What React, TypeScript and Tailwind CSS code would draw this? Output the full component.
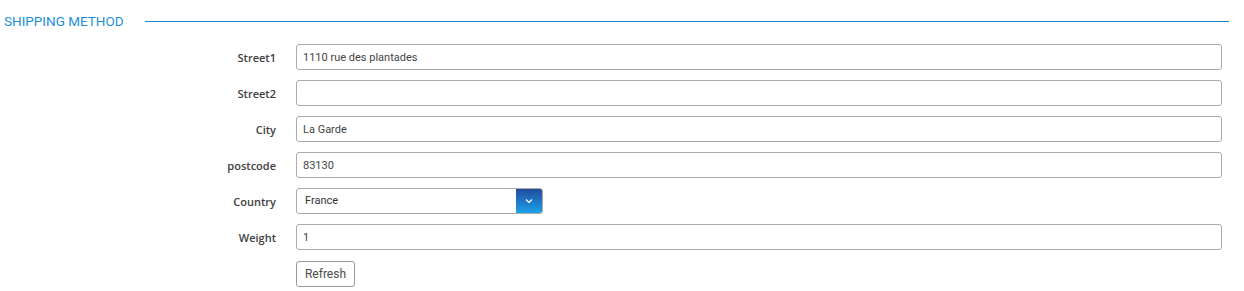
import React from "react";

const labelCls =
  "w-[276px] shrink-0 text-right text-[11px] font-semibold text-[#404040] leading-none [font-family:'Open_Sans',sans-serif]";
const inputCls =
  "h-[26px] rounded-[3px] border border-[#ababab] bg-white px-[6px] text-[11px] text-[#444] outline-none [font-family:Roboto,sans-serif]";

function Row({ label, children }: { label: string; children: React.ReactNode }) {
  return (
    <div className="flex h-[26px] items-center">
      <div className={labelCls}>{label}</div>
      <div className="ml-[20px] flex flex-1 items-center">{children}</div>
    </div>
  );
}

export default function App() {
  return (
    <div className="h-[291px] w-[1244px] bg-white pr-[22px] [font-family:Roboto,sans-serif]">
      <div className="flex h-[44px] items-center pl-[4px]">
        <div className="w-[121px] whitespace-nowrap text-[13.5px] font-normal uppercase text-[#1e8fd6] leading-none">Shipping Method</div>
        <div className="ml-[20px] mr-[-7px] h-px flex-1 bg-[#1a88c9] -translate-y-px" />
      </div>
      <div className="flex flex-col gap-[10px]">
        <Row label="Street1">
          <input className={inputCls + " flex-1"} defaultValue="1110 rue des plantades" />
        </Row>
        <Row label="Street2">
          <input className={inputCls + " flex-1"} defaultValue="" />
        </Row>
        <Row label="City">
          <input className={inputCls + " flex-1"} defaultValue="La Garde" />
        </Row>
        <Row label="postcode">
          <input className={inputCls + " flex-1"} defaultValue="83130" />
        </Row>
        <Row label="Country">
          <div className="flex h-[26px] w-[247px] overflow-hidden rounded-[3px] border border-[#ababab]">
            <div className="flex flex-1 items-center pl-[8px] text-[11px] text-[#333]">France</div>
            <div className="flex w-[26px] items-center justify-center bg-gradient-to-b from-[#1f4c9e] to-[#1ba3ea]">
              <svg width="8" height="6" viewBox="0 0 8 6" fill="none">
                <path d="M1 1.5 L4 4.5 L7 1.5" stroke="white" strokeWidth="1.2" />
              </svg>
            </div>
          </div>
        </Row>
        <Row label="Weight">
          <input className={inputCls + " flex-1"} defaultValue="1" />
        </Row>
        <div className="flex h-[26px] items-center pt-px">
          <div className="w-[276px] shrink-0" />
          <button className="ml-[20px] h-[26px] w-[59px] rounded-[3px] border border-[#9a9a9a] bg-white text-[12px] text-[#4a4a4a]">
            Refresh
          </button>
        </div>
      </div>
    </div>
  );
}
